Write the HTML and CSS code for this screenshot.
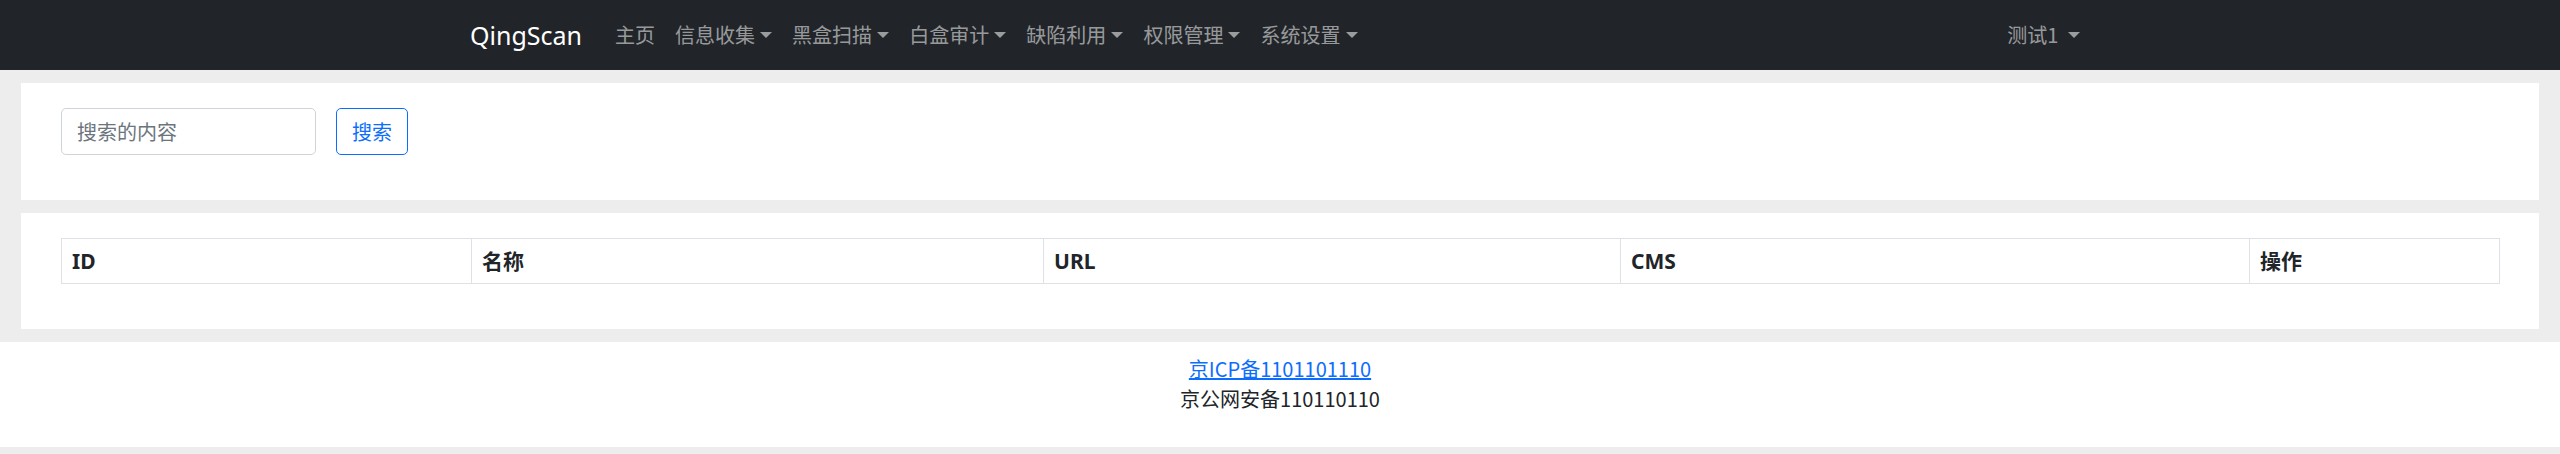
FILE: index.html
```html
<!DOCTYPE html>
<html lang="zh-CN">
<head>
<meta charset="utf-8">
<title>QingScan</title>
<link rel="stylesheet" href="styles.css">
</head>
<body>
<nav class="navbar">
  <div class="container">
    <a class="brand" href="#">QingScan</a>
    <ul class="nav">
      <li><a class="nav-link" href="#">主页</a></li>
      <li><a class="nav-link toggle" href="#">信息收集</a></li>
      <li><a class="nav-link toggle" href="#">黑盒扫描</a></li>
      <li><a class="nav-link toggle" href="#">白盒审计</a></li>
      <li><a class="nav-link toggle" href="#">缺陷利用</a></li>
      <li><a class="nav-link toggle" href="#">权限管理</a></li>
      <li><a class="nav-link toggle" href="#">系统设置</a></li>
    </ul>
    <ul class="nav nav-right">
      <li><a class="nav-link toggle" href="#">测试1 </a></li>
    </ul>
  </div>
</nav>

<section class="card">
  <form class="search-form">
    <input class="form-control" type="text" placeholder="搜索的内容">
    <button class="btn-outline" type="button">搜索</button>
  </form>
</section>

<section class="card">
  <table class="table">
    <colgroup>
      <col class="c-id"><col class="c-name"><col class="c-url"><col class="c-cms"><col class="c-op">
    </colgroup>
    <thead>
      <tr><th>ID</th><th>名称</th><th>URL</th><th>CMS</th><th>操作</th></tr>
    </thead>
    <tbody></tbody>
  </table>
</section>

<footer class="footer">
  <p class="line"><a href="#">京ICP备1101101110</a></p>
  <p class="line last">京公网安备110110110</p>
</footer>
</body>
</html>
```

FILE: styles.css
```css
* { box-sizing: border-box; }
html, body { margin: 0; padding: 0; }
body {
  background: #ededed;
  font-family: "Noto Sans", "Noto Sans CJK SC", sans-serif;
  font-size: 20px;
  line-height: 30px;
  color: #212529;
}
.navbar {
  background: #212529;
  height: 70px;
  padding: 10px 0;
}
.container {
  width: 1650px;
  margin: 0 auto;
  padding: 0 15px;
  display: flex;
  align-items: center;
}
.brand {
  color: #fff;
  font-size: 25px;
  line-height: 37px;
  text-decoration: none;
  margin-right: 23px;
  padding: 6px 0;
}
.nav {
  list-style: none;
  margin: 0;
  padding: 0;
  display: flex;
}
.nav-right { margin-left: auto; }
.nav-link {
  display: block;
  padding: 10px 10px;
  color: rgba(255,255,255,0.55);
  text-decoration: none;
  line-height: 30px;
  white-space: pre;
  font-family: "Noto Sans CJK SC", "Noto Sans", sans-serif;
}
.toggle::after {
  content: "";
  display: inline-block;
  margin-left: 0.255em;
  vertical-align: 0.255em;
  border-top: 0.3em solid;
  border-right: 0.3em solid transparent;
  border-left: 0.3em solid transparent;
  border-bottom: 0;
}
.card {
  background: #fff;
  margin: 13px 21px 0;
  padding: 25px 40px;
}
.search-form {
  display: flex;
  gap: 20px;
  margin: 0 0 20px;
}
.form-control {
  width: 255px;
  height: 47px;
  padding: 7px 15px;
  border: 1px solid #ced4da;
  border-radius: 5px;
  font: inherit;
  font-family: "Noto Sans CJK SC", sans-serif;
  color: #212529;
}
.form-control::placeholder { color: #6c757d; }
.btn-outline {
  width: 72px;
  height: 47px;
  padding: 7px 0;
  border: 1px solid #0d6efd;
  border-radius: 5px;
  background: #fff;
  color: #0d6efd;
  font: inherit;
  font-family: "Noto Sans CJK SC", sans-serif;
}
.table {
  width: 100%;
  table-layout: fixed;
  border-collapse: collapse;
  margin-bottom: 20px;
}
.c-id { width: 410px; }
.c-name { width: 572px; }
.c-url { width: 577px; }
.c-cms { width: 629px; }
.c-op { width: 250px; }
.table th {
  border: 1px solid #dee2e6;
  text-align: left;
  font-weight: 700;
  font-size: 21px;
  line-height: 28px;
  padding: 8px 10px;
  font-family: "Noto Sans", "Noto Sans CJK SC", sans-serif;
  color: #212529;
}
.footer {
  background: #fff;
  margin-top: 13px;
  padding: 12px 0 13px;
  text-align: center;
  font-family: "Noto Sans CJK SC", sans-serif;
}
.line { margin: 0; line-height: 30px; }
.line.last { margin-bottom: 20px; }
.footer a { color: #0d6efd; text-decoration: underline; }
```
